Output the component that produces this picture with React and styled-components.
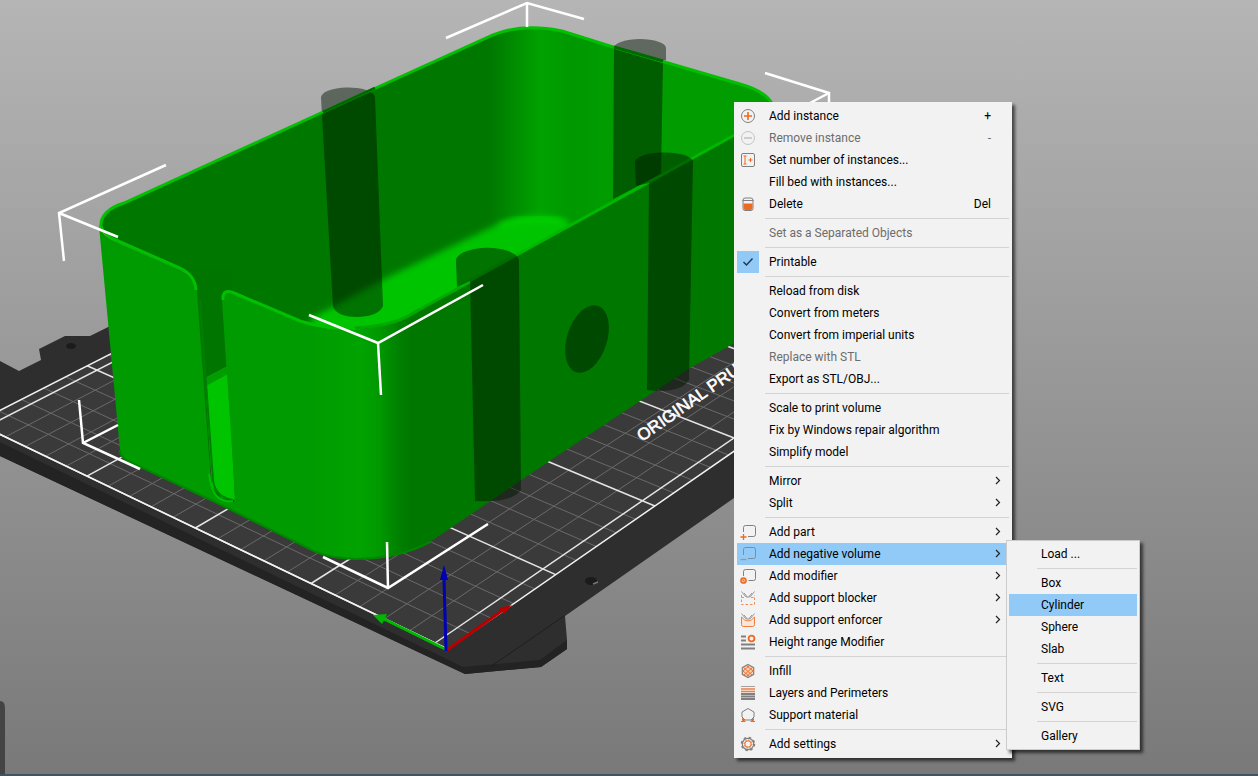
import React, {Component} from 'react'
import styled, {createGlobalStyle} from 'styled-components'

const GlobalStyle = createGlobalStyle`
	* {
		box-sizing: border-box;
	}
	body {
		margin: 0;
		font-family: Roboto, "Open Sans", sans-serif;
		font-size: 12px;
	}
`

const Viewport = styled.main`
	position: relative;
	min-height: 100vh;
	overflow: hidden;
	background: linear-gradient(#b5b5b5, #797979);
	border-bottom: 2px solid #43535e;
`

const SceneSvg = styled.svg`
	position: absolute;
	left: 0;
	top: 0;
	display: block;
`

const MenuBox = styled.div`
	position: absolute;
	left: ${props => props.$x}px;
	top: ${props => props.$y}px;
	width: ${props => props.$width}px;
	padding: 2px;
	background: #f2f2f2;
	border: 1px solid ${props => props.$border || '#f2f2f2'};
	box-shadow: 3px 3px 3px rgba(0, 0, 0, 0.6);
`

const Separator = styled.hr`
	height: 1px;
	margin: 3px 0 3px 28px;
	border: 0;
	background: #d3d3d3;
`

const itemStyle = `
	display: flex;
	align-items: center;
	width: 100%;
	height: 22px;
	padding: 0;
	border: 0;
	font: inherit;
	line-height: 22px;
	text-align: left;
	white-space: pre;
`

const Item = styled.button`
	${itemStyle}
	background: ${props => props.$active ? '#91c9f7' : 'transparent'};
	color: ${props => props.disabled ? '#6d6d6d' : '#000'};
`

const CheckItem = styled.label`
	${itemStyle}
	color: #000;
`

const IconCell = styled.span`
	display: grid;
	place-items: center;
	flex: none;
	width: 22px;
	height: 22px;
	margin-right: 10px;
	svg {
		grid-area: 1 / 1;
		pointer-events: none;
	}
`

const Tick = styled.input`
	grid-area: 1 / 1;
	appearance: none;
	width: 22px;
	height: 22px;
	margin: 0;
	&:checked {
		background: #91c9f7;
	}
`

const Caption = styled.span`
	flex: 1;
`

const Shortcut = styled.span`
	padding-right: 18px;
`

const Arrow = styled.svg`
	margin-right: 7px;
`

const GREY = '#808080'
const ORANGE = '#ed6b21'

const ICONS = {
	addInstance: (
		<g>
			<circle cx="8" cy="8" r="6.5" stroke={GREY}/>
			<path d="M8 4v8M4 8h8" stroke={ORANGE} strokeWidth="1.6"/>
		</g>
	),
	removeInstance: (
		<g stroke="#c4c4c4">
			<circle cx="8" cy="8" r="6.5"/>
			<path d="M4 8h8" strokeWidth="1.6"/>
		</g>
	),
	setNumber: (
		<g>
			<rect x="1.5" y="1.5" width="13" height="13" rx="1.5" stroke={GREY}/>
			<path d="M3.5 4h3M3.5 12h3M5 4v8M8.5 8h4M10.5 6v4" stroke={ORANGE}/>
		</g>
	),
	remove: (
		<g>
			<path d="M3 4.5V12.5q0 2 2 2h6q2 0 2-2V4.5" stroke={GREY}/>
			<path d="M3.5 7.5h9V12q0 2-2 2h-5q-2 0-2-2z" fill={ORANGE}/>
			<path d="M2.5 4.5h11M5 2h6q2 0 2 2.5h-10Q3 2 5 2" stroke={GREY}/>
		</g>
	),
	part: (
		<g>
			<path d="M3.5 8V3.5q0-2 2-2h8q2 0 2 2v7q0 2-2 2H8" stroke={GREY}/>
			<path d="M3.5 10v6M.5 13h6" stroke={ORANGE} strokeWidth="1.3"/>
		</g>
	),
	negative: (
		<g>
			<path d="M3.5 9V3.5q0-2 2-2h8q2 0 2 2v7q0 2-2 2H8" stroke="#77909f"/>
			<path d="M.5 13.5h6" stroke="#c98b66" strokeWidth="1.3"/>
		</g>
	),
	modifier: (
		<g>
			<path d="M3.5 8V3.5q0-2 2-2h8q2 0 2 2v7q0 2-2 2H8.5" stroke={GREY}/>
			<circle cx="3.5" cy="12.5" r="2.6" stroke={ORANGE} strokeWidth="1.5" fill="#f7b48c"/>
			<path d="M2.5 11.5l2 2" stroke={ORANGE}/>
		</g>
	),
	blocker: (
		<g>
			<path d="M1.5 1.5l4 5q2.5 1.5 5 0l4-5M4 3l3 3.5M12 3L9 6.5" stroke={GREY} opacity="0.8"/>
			<path d="M1.5 5v9.500h13V5M1.500 7.500h3.500M11 7.500h3.500" stroke={ORANGE} strokeDasharray="2.5 2" opacity="0.75"/>
		</g>
	),
	enforcer: (
		<g>
			<path d="M1.5 1.5l4 5q2.5 1.5 5 0l4-5M4 3l3 3.5M12 3L9 6.5" stroke={GREY} opacity="0.8"/>
			<path d="M1.5 5v7.5q0 2 2 2h9q2 0 2-2V5q-3 4-6.500 4T1.500 5" stroke={ORANGE} fill="#fbe3d6" opacity="0.85"/>
		</g>
	),
	heightRange: (
		<g>
			<path d="M1 2.5h5M1 6.500h5M1 10.500h14M1 14.500h14" stroke={GREY} strokeWidth="2"/>
			<circle cx="11.500" cy="4.500" r="2.900" stroke={ORANGE} strokeWidth="1.800"/>
		</g>
	),
	infill: (
		<g>
			<path d="M8 2l5 3v6l-5 3-5-3V5z" fill="#f9cdb3"/>
			<path d="M4 5l8 7M7 3l6 5M3 8l6 5M12 5l-8 7M9 3L3 8M13 8l-6 5" stroke={ORANGE} strokeWidth="0.9"/>
			<path d="M8 1.500l5.700 3.200v6.600L8 14.500l-5.700-3.200V4.700z" stroke={GREY} strokeWidth="1.200"/>
		</g>
	),
	layers: (
		<g>
			<path d="M1 1.500h14" stroke={GREY} opacity="0.7"/>
			<path d="M1 4h14M1 6.500h14" stroke={ORANGE} strokeWidth="1.500" opacity="0.85"/>
			<path d="M1 9h14M1 11.500h14M1 14h14" stroke={GREY} strokeWidth="1.800"/>
		</g>
	),
	support: (
		<g>
			<path d="M5 13H11L14 10V5L8 1.500 2 5v5z" stroke={GREY}/>
			<path d="M1 14.500h4.500M10.500 14.500H15M2.500 11.500v2l2 0zM13.500 11.500v2l-2 0z" stroke={ORANGE}/>
		</g>
	),
	settings: (
		<g>
			<circle cx="8" cy="8" r="5.700" stroke={GREY} strokeWidth="1.200"/>
			<circle cx="8" cy="8" r="6.500" stroke={GREY} strokeWidth="1.500" strokeDasharray="2.500 2.600"/>
			<circle cx="8" cy="8" r="3.200" stroke={ORANGE}/>
			<circle cx="8" cy="8" r="3.900" stroke={ORANGE} strokeDasharray="1.500 1.500"/>
		</g>
	)
}

const MAIN_MENU = [
	{text: 'Add instance', icon: 'addInstance', shortcut: '+'},
	{text: 'Remove instance', icon: 'removeInstance', shortcut: '-', disabled: true},
	{text: 'Set number of instances...', icon: 'setNumber'},
	{text: 'Fill bed with instances...'},
	{text: 'Delete', icon: 'remove', shortcut: 'Del'},
	null,
	{text: 'Set as a Separated Objects', disabled: true},
	null,
	{text: 'Printable', check: true},
	null,
	{text: 'Reload from disk'},
	{text: 'Convert from meters'},
	{text: 'Convert from imperial units'},
	{text: 'Replace with STL', disabled: true},
	{text: 'Export as STL/OBJ...'},
	null,
	{text: 'Scale to print volume'},
	{text: 'Fix by Windows repair algorithm'},
	{text: 'Simplify model'},
	null,
	{text: 'Mirror', sub: true},
	{text: 'Split', sub: true},
	null,
	{text: 'Add part', icon: 'part', sub: true},
	{text: 'Add negative volume', icon: 'negative', sub: true, active: true},
	{text: 'Add modifier', icon: 'modifier', sub: true},
	{text: 'Add support blocker', icon: 'blocker', sub: true},
	{text: 'Add support enforcer', icon: 'enforcer', sub: true},
	{text: 'Height range Modifier', icon: 'heightRange'},
	null,
	{text: 'Infill', icon: 'infill'},
	{text: 'Layers and Perimeters', icon: 'layers'},
	{text: 'Support material', icon: 'support'},
	null,
	{text: 'Add settings', icon: 'settings', sub: true}
]

const VOLUME_MENU = [
	{text: 'Load ...'},
	null,
	{text: 'Box'},
	{text: 'Cylinder', active: true},
	{text: 'Sphere'},
	{text: 'Slab'},
	null,
	{text: 'Text'},
	null,
	{text: 'SVG'},
	null,
	{text: 'Gallery'}
]

// bed cell (u along X, v along Y) -> point on screen
const project = (u, v) => {
	const w = 1 + 0.00873 * u + 0.00714 * v
	return [
		((435 + 26.34 * u - 22.58 * v) / w).toFixed(1),
		((643 - 9.85 * u - 7.73 * v) / w).toFixed(1)
	]
}

const segment = (u1, v1, u2, v2) => `M${project(u1, v1)}L${project(u2, v2)}`

const range = n => Array.from({length: n}, (_, i) => i)

const gridPath = bold => [
	...range(26).filter(u => (u % 5 === 0) === bold).map(u => segment(u, -0.5, u, 20.5)),
	...range(21).filter(v => (v % 5 === 0) === bold).map(v => segment(0, v, 25, v))
].join('')

const SHEET = [[0, -0.5], [25, -0.5], [25, 20.5], [0, 20.5]].map(p => project(...p)).join(' ')

class Bed extends Component {
	render() {
		return (
			<g>
				<path d="M0 361L19 371 41 360 39 349 65 336H90L300 232 800 300V452L565 616 567 640V649L541 667 465 674 0 456Z" fill="#2e2e2e"/>
				<path d="M0 442L463 667 540 660 567 640V649L541 667 465 674 0 456Z" fill="#232323"/>
				<path d="M490 667L564 616" stroke="#1f1f1f"/>
				<ellipse cx="71" cy="346" rx="5" ry="3" fill="#1b1b1b"/>
				<ellipse cx="591" cy="581" rx="6" ry="4" fill="#1b1b1b"/>
				<path d="M593 584L598 582" stroke="#777" strokeWidth="1.5"/>
				<polygon points={SHEET} fill="#3a3a3a"/>
				<path d={gridPath(false)} stroke="#6a6a6a" strokeWidth="1"/>
				<path d={gridPath(true)} stroke="#e4e4e4" strokeWidth="1.5"/>
				<polygon points={SHEET} stroke="#f2f2f2" strokeWidth="1.5"/>
				<text
					transform="translate(642 442) rotate(-35)"
					fill="#fff"
					stroke="#fff"
					strokeWidth="0.6"
					fontFamily="Liberation Sans, sans-serif"
					fontSize="17"
				>
					ORIGINAL PRUSA
				</text>
			</g>
		)
	}
}

const INSIDE = 'M101 228Q99 211 124 203L323 112 400 77 493 35Q522 23 562 31L613 47 740 84Q768 92 773 106V120L740 132 470 284 415 312Q395 326 355 329 325 330 300 321L234 293 197 290Q197 277 180 270L116 242Z'

class Tray extends Component {
	render() {
		return (
			<g>
				{/* inner walls */}
				<path d={INSIDE} fill="url(#inner)"/>
				<g clipPath="url(#insideClip)">
					<path d="M312 318L390 276 498 224Q527 212 556 217L590 236 420 340 300 350Z" fill="#00c400" filter="url(#soft)"/>
					<path d="M500 226Q530 214 566 222" stroke="#00d800" strokeWidth="4" filter="url(#soft)"/>
				</g>
				{/* slot with the floor showing through */}
				<path d="M190 270H232L236 500H214L202 400Z" fill="#007600"/>
				<path d="M205 378L228 366 235 500 222 498 212 486Z" fill="#00c400"/>
				<path d="M205 378L228 366 228 374 206 386Z" fill="#009c00"/>
				{/* far pair of negative cylinders */}
				<g fill="#001400" opacity="0.46">
					<path d="M321 98A27 10 0 0 1 375 97L383 306Q379 316 358 317 337 317 333 307Z"/>
					<path d="M614 48A26 9 0 0 1 666 48V60L663 61 661 174 613 199Z"/>
				</g>
				{/* outer faces */}
				<path d="M99 226Q101 235 116 242L180 270Q197 277 197 292L211 482Q214 503 234 502L235 495 222 300Q221 287 234 292L300 320Q328 331 360 329 395 326 415 312L470 282 740 132V340L690 368 548 462 430 542Q398 559 355 559 330 558 316 552L213 501 128 461Q120 457 120 450Z" fill="url(#outer)"/>
				<path d="M200 300L213 480Q215 497 233 500" stroke="#007f00" strokeWidth="2"/>
				<path d="M209 474L211 484Q215 503 233 501" stroke="#00bd00" strokeWidth="2"/>
				<path d="M120 450Q120 457 128 461L213 501 316 552Q330 558 355 559 398 559 430 542" stroke="#008600" strokeWidth="2"/>
				{/* rim */}
				<g stroke="#00c000" strokeWidth="3">
					<path d="M101 228Q99 211 124 203L323 112 400 77 493 35Q522 23 562 31L613 47 740 84Q768 92 773 106"/>
					<path d="M101 226Q103 235 118 241L180 268Q195 275 196 290"/>
					<path d="M223 300Q222 288 234 293L300 321Q328 330 360 328"/>
					<path d="M355 328Q395 326 415 312L470 282" stroke="#00a800"/>
					<path d="M460 286L740 132" stroke="#00b800"/>
				</g>
				{/* the rim stays behind the tops of the far cylinders */}
				<g stroke="#006a00" strokeWidth="3">
					<path d="M323 112L375 88"/>
					<path d="M614 47L663 61"/>
				</g>
				{/* near pair and the hole in the front wall */}
				<g fill="#001400" opacity="0.46">
					<path d="M635 164A29 10 0 0 1 693 161L689 380Q680 394 647 390L649 183 636 186Z"/>
					<path d="M456 262A31 13 0 0 1 519 260L521 490Q512 503 475 501L470 281 457 287Z"/>
					<ellipse cx="587" cy="339" rx="20" ry="35" transform="rotate(18 587 339)"/>
				</g>
			</g>
		)
	}
}

class Scene extends Component {
	render() {
		return (
			<SceneSvg width="1258" height="776" viewBox="0 0 1258 776" fill="none" aria-hidden="true">
				<defs>
					<linearGradient id="inner" gradientUnits="userSpaceOnUse" x1="490" y1="0" x2="600" y2="0">
						<stop offset="0" stopColor="#007800"/>
						<stop offset="0.1" stopColor="#008200"/>
						<stop offset="0.45" stopColor="#00a200"/>
						<stop offset="0.75" stopColor="#009800"/>
						<stop offset="1" stopColor="#009c00"/>
					</linearGradient>
					<linearGradient id="outer" gradientUnits="userSpaceOnUse" x1="310" y1="0" x2="410" y2="0">
						<stop offset="0" stopColor="#009b00"/>
						<stop offset="0.5" stopColor="#00a300"/>
						<stop offset="0.68" stopColor="#009a00"/>
						<stop offset="0.9" stopColor="#007f00"/>
						<stop offset="1" stopColor="#007800"/>
					</linearGradient>
					<filter id="soft" x="-10%" y="-30%" width="120%" height="160%">
						<feGaussianBlur stdDeviation="3"/>
					</filter>
					<clipPath id="insideClip">
						<path d={INSIDE}/>
					</clipPath>
				</defs>
				<Bed/>
				<Tray/>
				{/* selection box corners */}
				<g stroke="#fff" strokeWidth="2.5">
					<path d="M166 165L59 213 64 261M59 213L118 237"/>
					<path d="M446 38L527 3 584 19M527 3V27"/>
					<path d="M765 73L829 93V106M829 93L810 103"/>
					<path d="M309 315L378 343 483 285M378 343L381 395"/>
					<path d="M79 400L83 443 140 469M83 443L118 425"/>
					<path d="M323 557L388 588 488 524M387 542L388 588"/>
				</g>
				{/* axes */}
				<g strokeWidth="3">
					<path d="M447 650L503 610" stroke="#b80000"/>
					<path d="M499 608L512 605 504 614Z" fill="#b80000"/>
					<path d="M447 650L382 618" stroke="#00b800"/>
					<path d="M373 615L387 614 382 624Z" fill="#00b800"/>
					<path d="M446 651L444 578" stroke="#0000b4"/>
					<path d="M444 565L448 580H440Z" fill="#0000b4"/>
				</g>
				<path d="M0 701Q5 701 5 708V774H0Z" fill="#444"/>
			</SceneSvg>
		)
	}
}

class Menu extends Component {
	renderItem(item, i) {
		if (!item) {
			return <Separator key={i}/>
		}
		if (item.check) {
			return (
				<CheckItem key={i}>
					<IconCell>
						<Tick type="checkbox" defaultChecked/>
						<svg width="16" height="16" fill="none">
							<path d="M3.5 8L6.500 11 12.500 4.500" stroke="#1d3a55" strokeWidth="1.5"/>
						</svg>
					</IconCell>
					<Caption>{item.text}</Caption>
				</CheckItem>
			)
		}
		return (
			<Item key={i} type="button" role="menuitem" disabled={item.disabled} $active={item.active}>
				<IconCell>
					{item.icon && <svg width="16" height="16" fill="none">{ICONS[item.icon]}</svg>}
				</IconCell>
				<Caption>{item.text}</Caption>
				{item.shortcut && <Shortcut>{item.shortcut}</Shortcut>}
				{
					item.sub &&
					<Arrow width="8" height="10" fill="none">
						<path d="M2 1L5.500 4.500 2 8" stroke="#222" strokeWidth="1.2"/>
					</Arrow>
				}
			</Item>
		)
	}

	render() {
		const {items, label, x, y, width, border} = this.props

		return (
			<MenuBox role="menu" aria-label={label} $x={x} $y={y} $width={width} $border={border}>
				{items.map(this.renderItem)}
			</MenuBox>
		)
	}
}

export default class App extends Component {
	render() {
		return (
			<Viewport>
				<GlobalStyle/>
				<Scene/>
				<Menu label="Object" items={MAIN_MENU} x={734} y={102} width={278}/>
				<Menu label="Add negative volume" items={VOLUME_MENU} x={1006} y={540} width={134} border="#ccc"/>
			</Viewport>
		)
	}
}
